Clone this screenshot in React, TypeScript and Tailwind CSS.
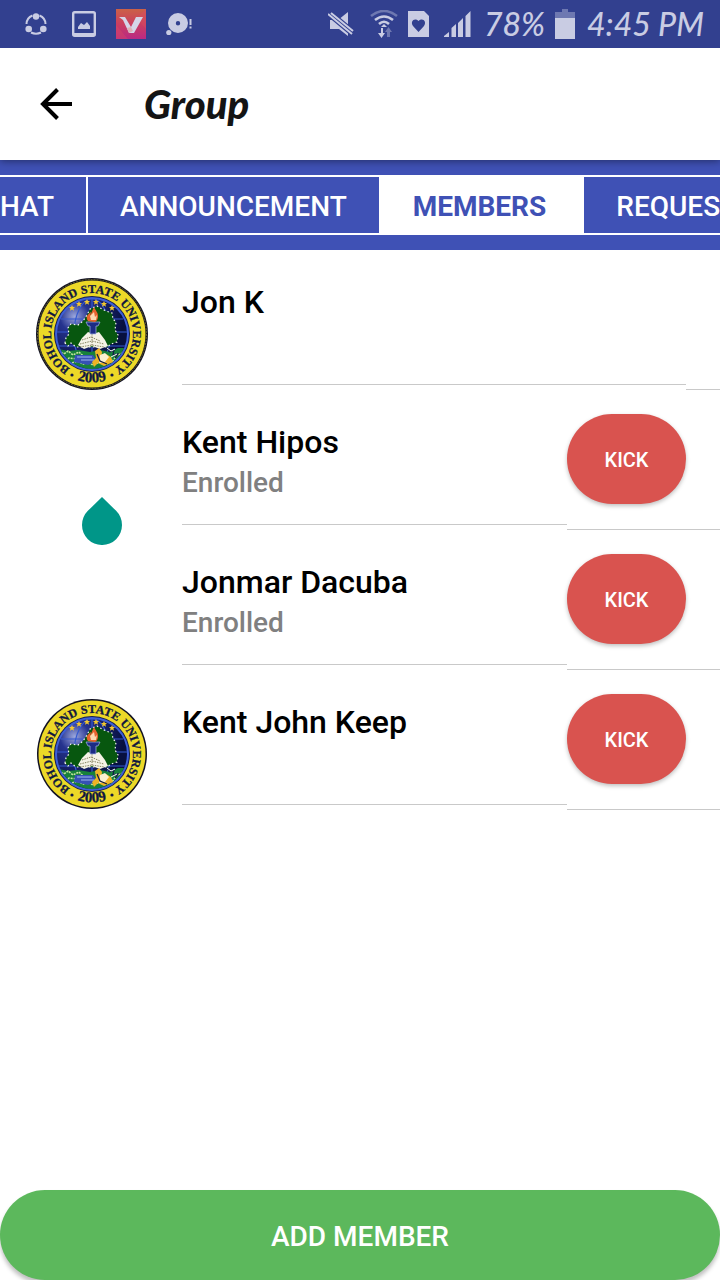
import React, { useId } from "react";

type Member = {
  name: string;
  status?: string;
  seal?: "ringed" | "plain";
  removable: boolean;
};

const members: Member[] = [
  { name: "Jon K", seal: "ringed", removable: false },
  { name: "Kent Hipos", status: "Enrolled", removable: true },
  { name: "Jonmar Dacuba", status: "Enrolled", removable: true },
  { name: "Kent John Keep", seal: "plain", removable: true },
];

const stars = [
  [-20, -26],
  [-13, -30],
  [-5, -32],
  [4, -32],
  [12, -30],
  [20, -26],
];

function Seal({ ringed }: { ringed: boolean }) {
  const id = useId();
  return (
    <svg viewBox="-56 -56 112 112" className="h-28 w-28" role="img" aria-label="Bohol Island State University 2009">
      <defs>
        <path id={`${id}top`} d="M0 41A41 41 0 1 1 0.010 41" />
        <path id={`${id}bottom`} d="M-48.500 0A48.500 48.500 0 0 0 48.500 0" />
        <radialGradient id={`${id}globe`} cx="0.25" cy="0.25" r="0.7">
          <stop offset="0" stopColor="#9aa6dc" />
          <stop offset="0.3" stopColor="#26338f" />
          <stop offset="1" stopColor="#07103f" />
        </radialGradient>
        <clipPath id={`${id}clip`}>
          <circle r="35" />
        </clipPath>
      </defs>
      <circle r={ringed ? 56 : 55} fill="#111122" />
      {ringed && <circle r="54.500" fill="none" stroke="#8a8433" strokeWidth="0.7" strokeDasharray="2 1" />}
      <circle r="53.500" fill="#ecd827" />
      <circle r="38" fill="#141b4d" />
      <circle r="37" fill="#3d5fd6" />
      <circle r="35" fill={`url(#${id}globe)`} />
      <g clipPath={`url(#${id}clip)`}>
        <g fill="none" stroke="#3459cf" strokeWidth="1.200">
          <path d="M0-35V35M-35-2H35M-31-15H31M-33 12H33" />
          <ellipse rx="18" ry="35" />
        </g>
        <path d="M-40 19l7-4 9 2 10-1 12 2 10-2 10 2 8-4 12 0V40H-40z" fill="#17813a" />
        <path
          d="M-33 17l5 3 4-3 5 4 6-3 3 3-5 4-8-1-4 4-4-4-3 2zM-20 29l5-2 6 3 5-2 5 3 7-3 5-3 7 3 5-7 6-2"
          fill="none"
          stroke="#c4e49c"
          strokeWidth="1.600"
          strokeDasharray="2 1"
        />
        <path d="M-17 21h18l4 6-9 4-14-3z" fill="#3551b5" />
        <path d="M-15 23H0M-11 26H2" stroke="#9fb6ef" />
      </g>
      <path
        d="M-27 9L-26 4-23 0-24-6-21-10-14-9-9-13-5-19-2-25 5-28 10-25 14-23 20-21 21-15 24-12 23-4 26 1 25 8 19 10 15 13 -16 13 -21 9-24 12z"
        fill="#07570f"
        stroke="#f4f7ee"
        strokeWidth="1.200"
        strokeDasharray="1.500 2.500"
      />
      <path d="M-14 11l4-7 6-6 5 2 6-2 6 8 3 6-8 3-8-3-8 3z" fill="#f5f3e6" />
      <path d="M-10 6l9-3 9 4M-12 10l12-3 12 3M-12 13l12-2 12 2M0 0v12" fill="none" stroke="#6a673e" strokeWidth="0.8" strokeDasharray="1.500 1" />
      <path d="M-6-12H8l-2 4H4V0H-2V-8H-4z" fill="#1c2c85" stroke="#a9b9ee" strokeWidth="0.7" />
      <path d="M-4-13c-3-4 0-7 3-9l-1 4 4-9c1 3 4 5 4 9 0 3-1 5-3 6z" fill="#e7632e" />
      <path d="M-1-14l-1-4 4-4 1 5 2-2-1 5z" fill="#fbd9b0" />
      <path d="M3 17l4-3 3 4-1 7 5-5 5 3 2 5-9 4-6-3-4 4-2-5 4-4z" fill="#efb426" />
      <path d="M8 21l5-2 4 4-4 5-6 1z" fill="#fbf0d0" />
      <path d="M13 17l3-3 2 4 4-2-1 5 5-1-3 4M5 20l3 7 7 3" fill="none" stroke="#111d45" strokeWidth="1.300" />
      <path d="M15 14l4 3 4-2M19 23l6-3" fill="none" stroke="#ffffff" strokeWidth="1" />
      {stars.map(([x, y]) => (
        <path
          key={x}
          transform={`translate(${x} ${y})`}
          d="M0-3L0.900-1H3L1.400 0.500 2 2.800 0 1.500-2 2.800-1.400 0.500-3-1H-0.900z"
          fill="#f2c72f"
        />
      ))}
      <g
        fill="#10183f"
        className="font-['Liberation_Serif',serif] font-bold"
        stroke="#10183f"
        strokeWidth="0.3"
        textAnchor="middle"
      >
        <text className="text-[12px]">
          <textPath href={`#${id}top`} startOffset="50%">
            BOHOL ISLAND STATE UNIVERSITY
          </textPath>
        </text>
        <text className="text-[15px]">
          <textPath href={`#${id}bottom`} startOffset="50%">
            2009
          </textPath>
        </text>
      </g>
      <circle cx="-20" cy="41" r="1.600" fill="#10183f" />
      <circle cx="20" cy="41" r="1.600" fill="#10183f" />
    </svg>
  );
}

function StatusBar() {
  return (
    <div className="relative z-10 flex h-12 items-center justify-between bg-[#32408f] pr-4 pl-6 text-[#c9cce3]">
      <div className="flex items-center">
        <svg viewBox="0 0 24 24" className="h-6 w-6" fill="currentColor" aria-hidden="true">
          <path d="M8.500 3.500A9.500 9.500 0 0 0 2.500 12M15.500 3.500A9.500 9.500 0 0 1 21.500 12M7 20.500Q12 23 17 20.500" fill="none" stroke="currentColor" strokeWidth="2" />
          <circle cx="12" cy="4.500" r="3.200" />
          <circle cx="4.700" cy="17" r="3.300" />
          <circle cx="19.300" cy="17" r="3.300" />
        </svg>
        <svg viewBox="0 0 24 26" className="ml-6 h-[26px] w-6" aria-hidden="true">
          <rect x="1.200" y="1.200" width="21.600" height="23.600" rx="1.500" fill="none" stroke="currentColor" strokeWidth="2.400" />
          <path d="M2 22h20v3H2zM6 18v-2l3-4 3 2 3-3 3 4v3z" fill="currentColor" />
        </svg>
        <svg viewBox="0 0 30 30" className="ml-5 h-[30px] w-[30px]" aria-hidden="true">
          <defs>
            <linearGradient id="vbg" x1="0" y1="0" x2="0" y2="1">
              <stop offset="0" stopColor="#cb6148" />
              <stop offset="0.5" stopColor="#cb3e60" />
              <stop offset="1" stopColor="#b92984" />
            </linearGradient>
          </defs>
          <path d="M0 0h30v30H0z" fill="url(#vbg)" />
          <path d="M0 16L12 30H0zM20 9l10-9v20z" fill="#d94a65" opacity="0.4" />
          <path d="M3 8h6l6 10 5-10h7L18 24h-5L7 11z" fill="#d5d5e8" />
          <path d="M13 24l-2-5 4-1 2 4z" fill="#ddb1b6" />
        </svg>
        <svg viewBox="0 0 28 24" className="ml-5 h-6 w-7" fill="currentColor" aria-hidden="true">
          <path fillRule="evenodd" d="M12 1a10 10 0 1 1 0 20 10 10 0 0 1 0-20zm0 8a2.200 2.200 0 1 0 0 4.400A2.200 2.200 0 0 0 12 9z" />
          <circle cx="2.800" cy="20.500" r="2.600" />
          <path d="M23.500 7h2v6h-2zM23.500 14.500h2v2h-2z" />
        </svg>
      </div>
      <div className="flex items-center">
        <svg viewBox="0 0 26 24" className="h-6 w-[26px]" aria-hidden="true">
          <path d="M2 8h8L20 0v24l-9-7H2z" fill="currentColor" />
          <path d="M1 1l24 20" stroke="#32408f" strokeWidth="7" />
          <path d="M0 2l24 20M3 1l22 18" stroke="currentColor" strokeWidth="2" />
        </svg>
        <svg viewBox="0 0 28 28" className="ml-4 h-7 w-7" fill="none" stroke="currentColor" strokeWidth="2.600" aria-hidden="true">
          <path d="M1 6Q14-4 27 6" opacity="0.4" />
          <path d="M5 10Q14 3 23 10M9 14Q14 9.500 19 14" />
          <path d="M14 14l3 3h-6z" fill="currentColor" stroke="none" />
          <path d="M11 18v5H8l3.500 5L15 23h-2v-5z" fill="currentColor" stroke="none" />
          <path d="M17 27v-5h-2l3.500-5 3.500 5h-2v5z" fill="currentColor" stroke="none" opacity="0.4" />
        </svg>
        <svg viewBox="0 0 22 26" className="ml-2.5 h-[26px] w-[22px]" aria-hidden="true">
          <path d="M0 0h16l5 5v21H0z" fill="currentColor" />
          <path d="M10.500 21L5 15c-3-4 1-9 5.500-5 4.500-4 8.500 1 5.500 5z" fill="#32408f" />
        </svg>
        <svg viewBox="0 0 28 26" className="ml-3.5 h-[26px] w-7" fill="currentColor" aria-hidden="true">
          <path d="M0 26v-1l5-4v5zM7.500 26v-9l4.500-4v13zM14 26V12l5-5v19zM21.500 26V5l5-5v26z" />
        </svg>
        <span className="ml-3 font-['Lato',sans-serif] text-[32px] leading-10 italic">78%</span>
        <svg viewBox="0 0 20 30" className="ml-2.5 h-[30px] w-5" fill="currentColor" aria-hidden="true">
          <path d="M7 0h6v3h7v6H0V3h7z" opacity="0.4" />
          <path d="M0 9h20v21H0z" />
        </svg>
        <span className="ml-3 font-['Lato',sans-serif] text-[32px] leading-10 italic">4:45 PM</span>
      </div>
    </div>
  );
}

export default function App() {
  return (
    <div className="relative flex min-h-screen flex-col overflow-x-hidden bg-white font-['Roboto',sans-serif] font-medium">
      <StatusBar />
      <header className="relative flex h-28 items-center bg-white pl-10 shadow-[0_1px_8px_rgba(0,0,0,0.45)]">
        <button type="button" aria-label="Back" className="h-8 w-8">
          <svg viewBox="0 0 32 32" className="h-8 w-8" fill="none" stroke="#000000" strokeWidth="4" aria-hidden="true">
            <path d="M32 16H3M17.500 1.500L3 16l14.500 14.500" />
          </svg>
        </button>
        <h1 className="ml-18 font-['Lato',sans-serif] text-[40px] leading-12 font-black text-[#141414] italic">Group</h1>
      </header>

      <nav className="bg-[#3f51b5] py-[15px]" aria-label="Group sections">
        <div className="flex h-15 overflow-hidden border-y-2 border-white text-[28px] text-white" role="tablist">
          <button
            type="button"
            role="tab"
            className="flex w-22 shrink-0 items-center justify-end overflow-hidden border-r-2 border-white pt-1 pr-8"
          >
            CHAT
          </button>
          <button type="button" role="tab" className="shrink-0 border-r-2 border-white px-8 pt-1">
            ANNOUNCEMENT
          </button>
          <button
            type="button"
            role="tab"
            aria-selected="true"
            className="shrink-0 border-r-2 border-white bg-white pt-1 pr-9 pl-8 font-bold text-[#3f51b5]"
          >
            MEMBERS
          </button>
          <button type="button" role="tab" className="shrink-0 px-8 pt-1">
            REQUEST
          </button>
        </div>
      </nav>

      <main className="flex-1">
        <ul>
          {members.map((member) => (
            <li key={member.name} className="flex h-35 items-start">
              <div className="w-[182px] shrink-0 pt-7 pl-9">
                {member.seal && <Seal ringed={member.seal === "ringed"} />}
              </div>
              <div className="h-[135px] min-w-0 flex-1 border-b border-[#c9c9c9] pt-8">
                <h2 className="text-[32px] leading-10 text-black">{member.name}</h2>
                {member.status && <p className="text-[28px] leading-[42px] text-[#808080]">{member.status}</p>}
              </div>
              <div className="h-full border-b border-[#c9c9c9] pt-6 pr-[34px]">
                {member.removable && (
                  <button
                    type="button"
                    className="h-[90px] w-[119px] rounded-[45px] bg-[#d9534f] pt-0.5 text-[20px] text-white shadow-[0_2px_4px_rgba(0,0,0,0.25)]"
                  >
                    KICK
                  </button>
                )}
              </div>
            </li>
          ))}
        </ul>
      </main>

      <button
        type="button"
        className="h-[90px] w-full rounded-[45px] bg-[#5cb85c] pt-1 text-[28px] text-white shadow-[0_4px_4px_rgba(0,0,0,0.25)]"
      >
        ADD MEMBER
      </button>

      <svg viewBox="0 0 40 48" className="absolute top-[497px] left-[82px] h-12 w-10" fill="#009688" aria-hidden="true">
        <path d="M20 0L34.140 13.860A20 20 0 1 1 5.860 13.860z" />
      </svg>
    </div>
  );
}
